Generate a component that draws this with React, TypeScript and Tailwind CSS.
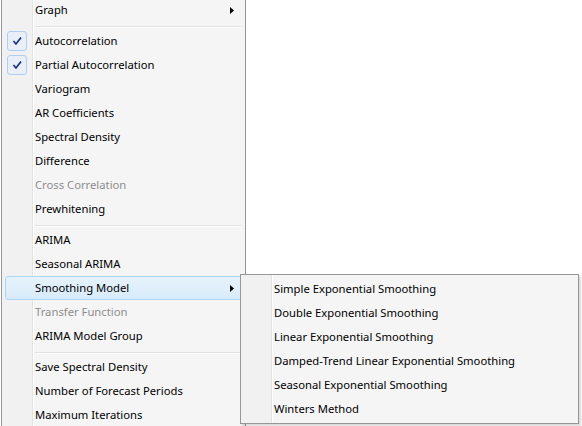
import React from 'react';

type Item =
  | { kind: 'sep' }
  | { kind: 'item'; label: string; checked?: boolean; disabled?: boolean; submenu?: boolean; hot?: boolean };

const mainItems: Item[] = [
  { kind: 'item', label: 'Graph', submenu: true },
  { kind: 'sep' },
  { kind: 'item', label: 'Autocorrelation', checked: true },
  { kind: 'item', label: 'Partial Autocorrelation', checked: true },
  { kind: 'item', label: 'Variogram' },
  { kind: 'item', label: 'AR Coefficients' },
  { kind: 'item', label: 'Spectral Density' },
  { kind: 'item', label: 'Difference' },
  { kind: 'item', label: 'Cross Correlation', disabled: true },
  { kind: 'item', label: 'Prewhitening' },
  { kind: 'sep' },
  { kind: 'item', label: 'ARIMA' },
  { kind: 'item', label: 'Seasonal ARIMA' },
  { kind: 'item', label: 'Smoothing Model', submenu: true, hot: true },
  { kind: 'item', label: 'Transfer Function', disabled: true },
  { kind: 'item', label: 'ARIMA Model Group' },
  { kind: 'sep' },
  { kind: 'item', label: 'Save Spectral Density' },
  { kind: 'item', label: 'Number of Forecast Periods' },
  { kind: 'item', label: 'Maximum Iterations' },
];

const smoothingItems = [
  'Simple Exponential Smoothing',
  'Double Exponential Smoothing',
  'Linear Exponential Smoothing',
  'Damped-Trend Linear Exponential Smoothing',
  'Seasonal Exponential Smoothing',
  'Winters Method',
];

const gutter =
  'bg-[linear-gradient(to_right,#f1f1f1_30px,#e2e3e3_30px,#e2e3e3_31px,#ffffff_31px,#ffffff_32px,#f5f5f5_32px)]';

function CheckBox() {
  return (
    <div className="ml-px flex h-[20px] w-[20px] items-center justify-center rounded-[3px] border border-[#aecfef] bg-[#e8eff8]">
      <svg width="12" height="12" viewBox="0 0 12 12">
        <polyline points="2.5,6 5,9 10,2.5" fill="none" stroke="#1c2f85" strokeWidth="1.7" strokeLinejoin="miter" />
      </svg>
    </div>
  );
}

function Arrow() {
  return (
    <svg width="4" height="7" viewBox="0 0 4 7" className="mr-[7px]">
      <polygon points="0,0 4,3.5 0,7" fill="#000" />
    </svg>
  );
}

function Row({ item }: { item: Extract<Item, { kind: 'item' }> }) {
  return (
    <div
      className={`mx-[3px] flex h-[24px] items-center rounded-[3px] border ${
        item.hot
          ? 'border-[#a9d7f1] bg-[linear-gradient(to_bottom,#e6f2fc,#d8ebf9)]'
          : 'border-transparent'
      }`}
    >
      <div className="flex w-[29px] shrink-0 items-center">{item.checked && <CheckBox />}</div>
      <span className={`flex-1 whitespace-nowrap ${item.disabled ? 'text-[#8d8d8d]' : 'text-black'}`}>
        {item.label}
      </span>
      {item.submenu && <Arrow />}
    </div>
  );
}

function Separator() {
  return (
    <div className="ml-[33px] mr-[4px] h-[7px] pt-[4px]">
      <div className="h-px bg-[#e0e0e0]" />
      <div className="h-px bg-white" />
    </div>
  );
}

export default function App() {
  return (
    <div
      className="relative h-[426px] w-[582px] overflow-hidden bg-white text-[11.25px] leading-none"
      style={{ fontFamily: '"Segoe UI", "Noto Sans", "Open Sans", sans-serif' }}
    >
      <div className={`-mt-[2px] ml-px w-[245px] border-x border-[#979797] ${gutter}`}>
        {mainItems.map((item, i) =>
          item.kind === 'sep' ? <Separator key={i} /> : <Row key={i} item={item} />
        )}
        <div className="h-[10px]" />
      </div>

      <div
        className={`absolute left-[240px] top-[274px] w-[339px] border border-[#979797] py-[2px] shadow-[2px_2px_2px_rgba(0,0,0,0.15)] ${gutter}`}
      >
        {smoothingItems.map((label) => (
          <Row key={label} item={{ kind: 'item', label }} />
        ))}
      </div>
    </div>
  );
}
